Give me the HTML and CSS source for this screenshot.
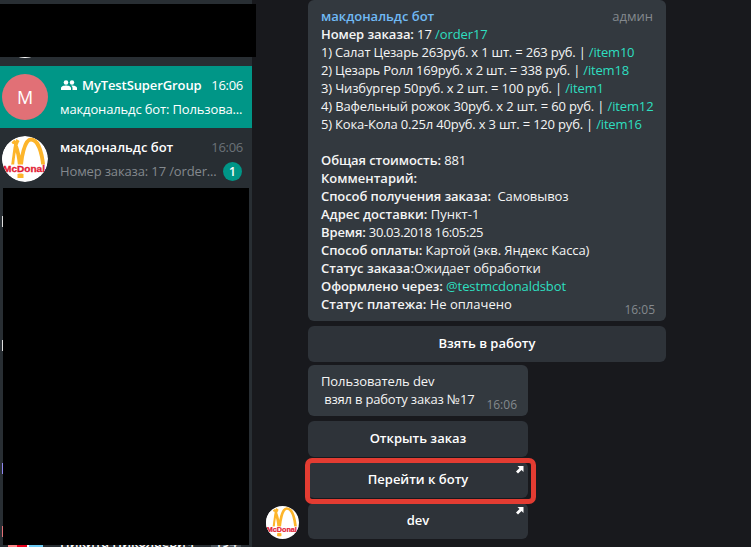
FILE: index.html
```
<!DOCTYPE html>
<html lang="ru">
<head>
<meta charset="utf-8">
<title>MyTestSuperGroup</title>
<link rel="stylesheet" href="styles.css">
</head>
<body>
<svg class="defs" width="0" height="0">
  <defs>
    <clipPath id="round"><circle cx="23" cy="23" r="23"/></clipPath>
    <symbol id="logo" viewBox="0 0 46 46">
      <g clip-path="url(#round)">
        <rect width="46" height="46" fill="#fff"/>
        <path d="M10 32C11 18 12 10 16 4M11 5C15 10 18 20 18.500 42M18.500 42C18.500 20 23 3.500 29 3.500C36 3.500 40 16 41.500 32" fill="none" stroke="#fdb52b" stroke-width="3.800" class="arch"/>
        <path d="M0 8H12L9 30H0Z" fill="#fff"/>
        <rect x="0" y="28.500" width="46" height="9" fill="#fff"/>
        <rect x="15.500" y="38" width="6" height="4" fill="#fdb52b"/>
        <text x="1" y="36.200" textLength="42" lengthAdjust="spacingAndGlyphs" class="logo-text">McDonal</text>
      </g>
    </symbol>
    <symbol id="arrow" viewBox="0 0 8 8"><path d="M1.500 0H7.500V6L5.500 4L2 7.500L0 5.500L3.500 2Z" fill="#fff"/></symbol>
  </defs>
</svg>
<div class="app">
  <aside class="sidebar">
    <div class="row hidden-row"><span class="peek"></span></div>
    <div class="row active">
      <div class="avatar letter">М</div>
      <div class="info">
        <div class="line top"><svg class="group" viewBox="0 0 16 10"><circle cx="5" cy="2.500" r="2.300"/><circle cx="11" cy="2.500" r="2.200"/><path d="M0 10V8C0 6.300 3 5.500 5 5.500S10 6.300 10 8V10ZM11.500 10V8C11.500 7 11 6.300 10.200 5.700C12 5.300 16 6.200 16 8V10Z"/></svg><b class="name-group">MyTestSuperGroup</b><span class="time">16:06</span></div>
        <div class="line"><span class="preview">макдональдс бот: Пользова...</span></div>
      </div>
    </div>
    <div class="row">
      <svg class="avatar"><use href="#logo"/></svg>
      <div class="info">
        <div class="line top"><b>макдональдс бот</b><span class="time">16:06</span></div>
        <div class="line muted"><span class="preview">Номер заказа: 17 /order...</span><span class="badge">1</span></div>
      </div>
    </div>
    <div class="blank">
      <i class="dot d1"></i><i class="dot d2"></i><i class="dot d3"></i><i class="dot d4"></i>
    </div>
    <div class="cut">
      <span class="cut-avatar"></span><span class="cut-name">Никита Николаевич</span><span class="cut-badge">194</span>
    </div>
    <div class="cover"></div>
  </aside>
  <main class="chat">
    <svg class="sender"><use href="#logo"/></svg>
    <div class="messages">
      <div class="bubble order">
        <div class="head"><b>макдональдс бот</b><span>админ</span></div>
        <p class="snug"><b>Номер заказа:</b> 17 <a>/order17</a></p>
        <p class="tight">1) Салат Цезарь 263руб. x 1 шт. = 263 руб. | <a>/item10</a></p>
        <p class="tight">2) Цезарь Ролл 169руб. x 2 шт. = 338 руб. | <a>/item18</a></p>
        <p class="tight first">3) Чизбургер 50руб. x 2 шт. = 100 руб. | <a>/item1</a></p>
        <p class="tight first">4) Вафельный рожок 30руб. x 2 шт. = 60 руб. | <a>/item12</a></p>
        <p class="tight">5) Кока-Кола 0.25л 40руб. x 3 шт. = 120 руб. | <a>/item16</a></p>
        <p>&nbsp;</p>
        <p class="snug"><b>Общая стоимость:</b> 881</p>
        <p><b>Комментарий:</b></p>
        <p class="snug"><b>Способ получения заказа:</b>  Самовывоз</p>
        <p><b>Адрес доставки:</b> Пункт-1</p>
        <p class="date"><b>Время:</b> 30.03.2018 16:05:25</p>
        <p class="snug"><b>Способ оплаты:</b> Картой (экв. Яндекс Касса)</p>
        <p><b>Статус заказа:</b>Ожидает обработки</p>
        <p class="snug"><b>Оформлено через:</b> <a>@testmcdonaldsbot</a></p>
        <p><b>Статус платежа:</b> Не оплачено</p>
        <span class="stamp">16:05</span>
      </div>
      <div class="button wide">Взять в работу</div>
      <div class="bubble note">
        <p class="snug">Пользователь dev</p>
        <p class="tight"> взял в работу заказ №17</p>
        <span class="stamp">16:06</span>
      </div>
      <div class="button">Открыть заказ</div>
      <div class="button marked">Перейти к боту<svg class="arrow"><use href="#arrow"/></svg></div>
      <div class="button">dev<svg class="arrow"><use href="#arrow"/></svg></div>
    </div>
  </main>
</div>
</body>
</html>
```
FILE: styles.css
```
* { box-sizing: border-box; }
body { margin: 0; width: 751px; height: 547px; overflow: hidden; background: #18191d; color: #f5f5f5; font: 13px/18px "Open Sans", "Noto Sans", sans-serif; }
b { font-weight: 600; }
p { margin: 0; white-space: pre; }
.snug { letter-spacing: -.09px; }
.tight { letter-spacing: -.19px; }
.first { letter-spacing: -.14px; }
.date { letter-spacing: -.36px; }
.date b { letter-spacing: -.1px; }
.defs { position: absolute; }
.logo-text { font: 900 9px "Liberation Sans", Arial, sans-serif; fill: #e31b35; stroke: #e31b35; stroke-width: .3px; }
.app { display: flex; height: 547px; }
.sidebar { position: relative; width: 252px; flex: none; background: #282e33; display: flex; flex-direction: column; overflow: visible; }
.row { height: 62px; flex: none; display: flex; padding: 8px 9px 8px 2px; }
.hidden-row { height: 66px; }
.peek { width: 46px; height: 46px; border-radius: 50%; background: #fff; margin-top: 4px; }
.active { background: #009687; }
.avatar { width: 46px; height: 46px; flex: none; border-radius: 50%; }
.letter { background: #e17076; color: #fff; font-size: 18px; line-height: 47px; text-align: center; }
.info { flex: 1; margin-left: 12px; min-width: 0; padding-top: 2px; }
.line { display: flex; align-items: center; height: 18px; white-space: nowrap; color: #fff; }
.line.top { margin-bottom: 6px; }
.group { width: 16px; height: 10px; fill: #fff; margin: 0 5px 0 1px; flex: none; }
.name-group { letter-spacing: -.1px; }
.preview { letter-spacing: -.14px; }
.time { margin-left: auto; letter-spacing: -.3px; }
.row:not(.active) .time { color: #6b7278; }
.muted { color: #84898e; }
.badge { width: 19px; height: 19px; border-radius: 50%; background: #009687; color: #fff; font-weight: 600; font-size: 12px; text-align: center; line-height: 19px; margin: 0 1px 0 auto; }
.blank { position: relative; height: 357px; margin: -2px 3px 0; background: #000; flex: none; }
.dot { position: absolute; left: -1px; width: 1px; height: 11px; background: #ddd; }
.d1 { top: 28px; }
.d2 { top: 152px; }
.d3 { top: 275px; background: #8e85ee; }
.d4 { top: 338px; background: #e17076; }
.cut { height: 2px; overflow: hidden; display: flex; line-height: 18px; }
.cut-avatar { width: 35px; height: 2px; margin-left: 8px; background: linear-gradient(90deg, #f88 9px, #e8001c 9px 19px, #fff 19px 21px, #6ccbf5 21px); }
.cut-name { margin: -12px 0 0 17px; height: 18px; width: 151px; font-weight: 600; color: #fff; white-space: nowrap; }
.cut-badge { width: 30px; margin-top: -12px; height: 18px; background: #495158; text-align: center; font-weight: 600; }
.cover { position: absolute; left: 0; top: 4px; width: 256px; height: 53px; background: #000; z-index: 2; }
.chat { flex: 1; display: flex; align-items: flex-start; padding-left: 14px; }
.sender { width: 33px; height: 33px; flex: none; margin: 506px 9px 0 0; }
.messages { width: 358px; display: flex; flex-direction: column; }
.bubble { position: relative; background: #33393f; border-radius: 6px; padding: 7px 13px; }
.order { height: 321px; margin-bottom: 5px; }
.head { display: flex; justify-content: space-between; color: #84898e; }
.head b { color: #70baf5; }
a { color: #2edfc0; }
.stamp { position: absolute; right: 11px; bottom: 2px; font-size: 12px; color: #84898e; }
.note { width: 220px; height: 51px; margin-bottom: 5px; }
.button { position: relative; width: 220px; height: 36px; margin-bottom: 5px; border-radius: 6px; background: #2e3339; color: #fff; font-weight: 600; text-align: center; line-height: 35px; }
.wide { width: 358px; margin-bottom: 3px; }
.marked::after { content: ""; position: absolute; box-sizing: border-box; left: -3px; top: -4px; width: 231px; height: 46px; border: 5px solid #e33c32; border-radius: 7px; z-index: 1; }
.arrow { position: absolute; right: 4px; top: 4px; width: 8px; height: 8px; z-index: 2; }
```
